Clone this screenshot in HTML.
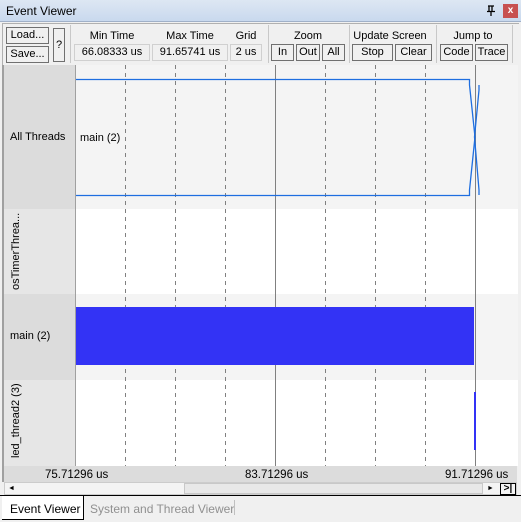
<!DOCTYPE html>
<html><head><style>
*{margin:0;padding:0;box-sizing:border-box}
body{width:521px;height:522px;background:#f0f0f0;font-family:"Liberation Sans",sans-serif;font-size:11px;color:#000;position:relative;overflow:hidden}
.a{position:absolute}
.btn{position:absolute;border:1px solid #707070;background:#f0f0f0;text-align:center;line-height:15px;height:17px;font-size:11px}
.fld{position:absolute;border:1px solid #d0d0d0;background:#f0f0f0;text-align:center;line-height:15px;height:17px}
.lbl{position:absolute;text-align:center;font-size:11px}
.sep{position:absolute;width:1px;background:#c8c8c8;top:25px;height:38px}
.vt{position:absolute;transform:rotate(-90deg);transform-origin:left top;white-space:nowrap;font-size:11px}
</style></head><body>
<div class="a" style="left:0;top:0;width:521px;height:22px;background:linear-gradient(#dde7f3,#c9d9ee);border-bottom:1px solid #a0b0c8"></div>
<div class="a" style="left:6px;top:4px;font-size:12px">Event Viewer</div>
<svg class="a" style="left:486px;top:5px" width="10" height="11"><path d="M2 1H8M3 1V6M6 1V6M1 6.5H9M5 7V11" stroke="#000" stroke-width="1.3" fill="none"/></svg>
<div class="a" style="left:503px;top:4px;width:15px;height:14px;background:#c75050;color:#fff;font-size:10px;text-align:center;line-height:13px;font-weight:bold">x</div>
<div class="a" style="left:2px;top:23px;width:517px;height:42px;border-top:1px solid #b0b0b0;border-left:1px solid #b0b0b0"></div>
<div class="btn" style="left:6px;top:27px;width:43px">Load...</div>
<div class="btn" style="left:6px;top:46px;width:43px">Save...</div>
<div class="btn" style="left:53px;top:28px;width:12px;height:34px;line-height:32px">?</div>
<div class="sep" style="left:70px"></div>
<div class="lbl" style="left:74px;top:30px;width:76px">Min Time</div>
<div class="lbl" style="left:152px;top:30px;width:76px">Max Time</div>
<div class="lbl" style="left:230px;top:30px;width:32px">Grid</div>
<div class="fld" style="left:74px;top:44px;width:76px">66.08333 us</div>
<div class="fld" style="left:152px;top:44px;width:76px">91.65741 us</div>
<div class="fld" style="left:230px;top:44px;width:32px">2 us</div>
<div class="sep" style="left:268px"></div>
<div class="lbl" style="left:270px;top:30px;width:76px">Zoom</div>
<div class="btn" style="left:271px;top:44px;width:23px">In</div>
<div class="btn" style="left:296px;top:44px;width:24px">Out</div>
<div class="btn" style="left:322px;top:44px;width:23px">All</div>
<div class="sep" style="left:349px"></div>
<div class="lbl" style="left:350px;top:30px;width:80px">Update Screen</div>
<div class="btn" style="left:352px;top:44px;width:41px">Stop</div>
<div class="btn" style="left:395px;top:44px;width:37px">Clear</div>
<div class="sep" style="left:436px"></div>
<div class="lbl" style="left:437px;top:30px;width:72px">Jump to</div>
<div class="btn" style="left:440px;top:44px;width:33px">Code</div>
<div class="btn" style="left:475px;top:44px;width:33px">Trace</div>
<div class="sep" style="left:512px"></div>

<div class="a" style="left:2px;top:65px;width:2px;height:417px;background:#a0a0a0"></div>
<div class="a" style="left:4px;top:65px;width:71px;height:144px;background:#dcdcdc"></div>
<div class="a" style="left:4px;top:209px;width:71px;height:85px;background:#e6e6e6"></div>
<div class="a" style="left:4px;top:294px;width:71px;height:86px;background:#dcdcdc"></div>
<div class="a" style="left:4px;top:380px;width:71px;height:86px;background:#e6e6e6"></div>
<div class="a" style="left:75px;top:65px;width:1px;height:401px;background:#a0a0a0"></div>
<div class="a" style="left:10px;top:131px">All Threads</div>
<div class="vt" style="left:10px;top:290px">osTimerThrea...</div>
<div class="a" style="left:10px;top:330px">main (2)</div>
<div class="vt" style="left:10px;top:458px">led_thread2 (3)</div>

<svg class="a" style="left:76px;top:65px" width="442" height="401">
<rect x="0" y="0" width="442" height="144" fill="#f4f4f4"/>
<rect x="0" y="144" width="442" height="85" fill="#fff"/>
<rect x="0" y="229" width="442" height="86" fill="#f4f4f4"/>
<rect x="0" y="315" width="442" height="86" fill="#fff"/>
<g stroke="#808080" stroke-dasharray="4,4">
<line x1="49.5" y1="0" x2="49.5" y2="401"/><line x1="99.5" y1="0" x2="99.5" y2="401"/><line x1="149.5" y1="0" x2="149.5" y2="401"/>
<line x1="249.5" y1="0" x2="249.5" y2="401"/><line x1="299.5" y1="0" x2="299.5" y2="401"/><line x1="349.5" y1="0" x2="349.5" y2="401"/>
</g>
<g stroke="#808080"><line x1="199.5" y1="0" x2="199.5" y2="401"/><line x1="399.5" y1="0" x2="399.5" y2="401"/></g>
<polyline points="0,14.5 393.5,14.5 393.5,20 399,72 393.5,125 393.5,130.5 0,130.5" fill="none" stroke="#1e6ee0" stroke-width="1.3"/>
<polyline points="403,20 403,25 398.5,72 403,125 403,130" fill="none" stroke="#1e6ee0" stroke-width="1.3"/>
<text x="4" y="76" font-size="11" font-family="Liberation Sans">main (2)</text>
<rect x="0" y="242" width="398" height="58" fill="#3333f5"/>
<rect x="398" y="327" width="2" height="58" fill="#3333f5"/>
</svg>

<div class="a" style="left:4px;top:466px;width:513px;height:16px;background:#dcdcdc"></div>
<div class="a" style="left:45px;top:469px;font-size:11.5px">75.71296 us</div>
<div class="a" style="left:245px;top:469px;font-size:11.5px">83.71296 us</div>
<div class="a" style="left:445px;top:469px;font-size:11.5px">91.71296 us</div>
<div class="a" style="left:4px;top:482px;width:513px;height:13px;background:#f4f4f4;border:1px solid #ccc"></div>
<div class="a" style="left:184px;top:483px;width:299px;height:11px;background:#e8e8e8;border:1px solid #c8c8c8"></div>
<div class="a" style="left:5px;top:483px;width:13px;height:11px;font-size:7px;line-height:11px;text-align:center">◄</div>
<div class="a" style="left:484px;top:483px;width:13px;height:11px;font-size:7px;line-height:11px;text-align:center">►</div>
<div class="a" style="left:500px;top:483px;width:16px;height:12px;border:1px solid #000;font-size:10px;line-height:10px;text-align:center;font-weight:bold">&gt;|</div>
<div class="a" style="left:0;top:495px;width:521px;height:1px;background:#000"></div>
<div class="a" style="left:2px;top:496px;width:82px;height:24px;background:#fff;border-right:1px solid #000;border-bottom:1px solid #000"></div>
<div class="a" style="left:10px;top:502px;font-size:12px">Event Viewer</div>
<div class="a" style="left:90px;top:502px;font-size:12px;color:#909090">System and Thread Viewer</div>
<div class="a" style="left:234px;top:500px;width:1px;height:15px;background:#c0c0c0"></div>
</body></html>
